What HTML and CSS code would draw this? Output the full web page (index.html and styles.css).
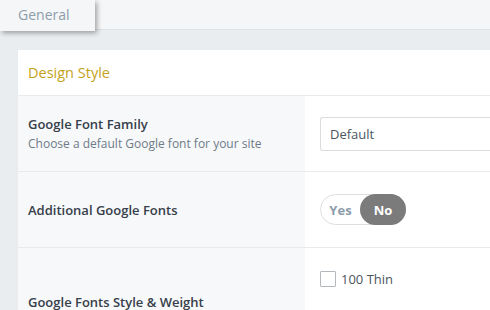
FILE: index.html
```html
<!DOCTYPE html>
<html>
<head>
<meta charset="utf-8">
<link rel="stylesheet" href="styles.css">
</head>
<body>
<div class="topbar">
  <div class="tab">General</div>
</div>
<div class="main">
  <div class="card">
    <div class="card-head">Design Style</div>
    <div class="row row-1">
      <div class="label">
        <div class="title">Google Font Family</div>
        <div class="desc">Choose a default Google font for your site</div>
      </div>
      <div class="field">
        <div class="select">Default</div>
      </div>
    </div>
    <div class="row row-2">
      <div class="label">
        <div class="title">Additional Google Fonts</div>
      </div>
      <div class="field">
        <div class="toggle"><span class="opt yes">Yes</span><span class="opt no">No</span></div>
      </div>
    </div>
    <div class="row row-3">
      <div class="label">
        <div class="title">Google Fonts Style &amp; Weight</div>
      </div>
      <div class="field field-top">
        <label class="check"><span class="box"></span><span>100 Thin</span></label>
      </div>
    </div>
  </div>
</div>
</body>
</html>
```

FILE: styles.css
```css
* { box-sizing: border-box; }
html, body { margin: 0; padding: 0; }
body {
  width: 490px;
  height: 310px;
  overflow: hidden;
  background: #eaedf0;
  font-family: "Open Sans", "Noto Sans", sans-serif;
  color: #3d4650;
}
.topbar {
  height: 30px;
  background: #f5f6f7;
  border-bottom: 1px solid #dfe2e5;
  position: relative;
}
.tab {
  position: absolute;
  left: 0;
  top: 0;
  width: 95px;
  height: 31px;
  background: #f5f6f7;
  box-shadow: 2px 2px 5px rgba(0,0,0,0.35);
  color: #8c9cab;
  font-size: 14px;
  padding-left: 18px;
  line-height: 29px;
}
.main {
  padding: 20px 0 0 18px;
}
.card {
  background: #ffffff;
}
.card-head {
  height: 46px;
  border-bottom: 1px solid #e8eaec;
  padding-left: 10px;
  color: #c4a21b;
  font-size: 14.5px;
  line-height: 45px;
}
.row {
  display: flex;
  border-bottom: 1px solid #e8eaec;
}
.row-1 { height: 76px; }
.row-2 { height: 76px; }
.row-3 { height: 108px; }
.label {
  flex: 0 0 287px;
  background: #f7f8fa;
  padding-left: 10px;
  display: flex;
  flex-direction: column;
  justify-content: center;
}
.title {
  font-size: 13px;
  font-weight: 600;
  color: #36404a;
  line-height: 18px;
}
.desc {
  font-size: 12px;
  color: #6e7b87;
  line-height: 18px;
  margin-top: 2px;
}
.field {
  flex: 1;
  min-width: 0;
  padding-left: 15px;
  display: flex;
  align-items: center;
}
.field-top { align-items: flex-start; padding-top: 22px; }
.select {
  flex: 0 0 200px;
  height: 34px;
  border: 1px solid #dcdcdc;
  border-right: none;
  border-radius: 3px 0 0 3px;
  padding-left: 9px;
  font-size: 13px;
  line-height: 32px;
  color: #4a5560;
}
.toggle {
  display: flex;
  height: 31px;
  width: 86px;
  border: 1px solid #dcdfe2;
  border-radius: 16px;
  font-size: 13px;
  font-weight: 700;
}
.opt {
  display: flex;
  align-items: center;
  justify-content: center;
}
.yes { width: 39px; color: #8c9cab; }
.no {
  width: 46px;
  margin: -1px -1px -1px 0;
  background: #7b7b7b;
  color: #ffffff;
  border-radius: 16px;
}
.check {
  display: flex;
  align-items: center;
  gap: 5px;
  font-size: 13px;
  color: #4a5560;
}
.box {
  width: 16px;
  height: 16px;
  border: 1px solid #b4b9be;
  border-radius: 1px;
  background: #fff;
}
```
